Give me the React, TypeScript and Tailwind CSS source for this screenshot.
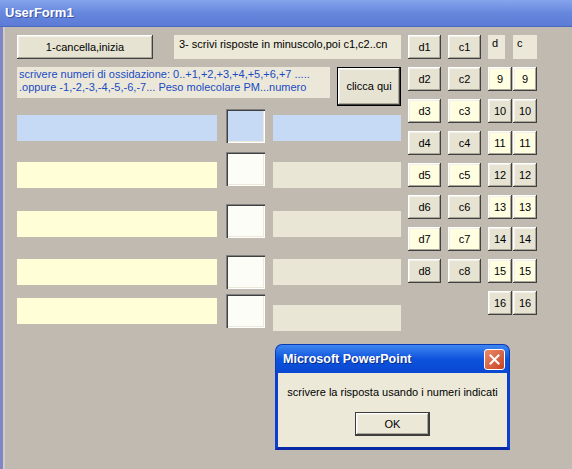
import React from "react";

const font = { fontFamily: '"Liberation Sans", Arial, sans-serif' };

const raised =
  "shadow-[inset_-1px_-1px_0_#404040,inset_1px_1px_0_#ffffff,inset_-2px_-2px_0_#aca899,inset_2px_2px_0_#f4f2e8]";
const sunken =
  "shadow-[inset_1px_1px_0_#808080,inset_2px_2px_0_#404040,inset_-1px_-1px_0_#ffffff,inset_-2px_-2px_0_#ece9d8]";

const Btn = ({
  children,
  className = "",
}: {
  children?: React.ReactNode;
  className?: string;
}) => (
  <div
    className={`flex items-center justify-center text-[11px] text-black ${raised} ${className}`}
  >
    {children}
  </div>
);

const grey = "bg-[#e6e3d3]";
const yellow = "bg-[#fffee0]";

// rows of the d / c / number buttons
const gridRows = [2, 3, 4, 5, 6, 7, 8];

const TextRow = ({
  top,
  boxTop,
  rightTop,
  first = false,
}: {
  top: string;
  boxTop: string;
  rightTop: string;
  first?: boolean;
}) => (
  <div className={`flex h-[34px] items-start ${top}`}>
    <div
      className={`w-[200px] h-[26px] ${boxTop} ${first ? "bg-[#c6d9f5]" : "bg-[#fffed6]"}`}
    />
    <div
      className={`ml-[9px] w-[39px] h-[34px] ${sunken} ${first ? "bg-[#c6d9f5]" : "bg-[#fdfdf8]"}`}
    />
    <div
      className={`ml-[8px] w-[128px] h-[26px] ${rightTop} ${first ? "bg-[#c6d9f5]" : "bg-[#e9e6d6]"}`}
    />
  </div>
);

export default function App() {
  return (
    <div
      className="relative w-[572px] h-[469px] overflow-hidden bg-[#c0bab0] flex flex-col"
      style={font}
    >
      {/* title bar */}
      <div className="h-[27px] shrink-0 flex items-center pl-[5px] bg-gradient-to-b from-[#86a4ec] via-[#6787dd] to-[#5b7bd6] border-b border-[#4d68c0]">
        <span className="text-white font-bold text-[13px] [text-shadow:1px_1px_0_#3c55a8]">
          UserForm1
        </span>
      </div>

      {/* body */}
      <div className="flex-1 flex border-l-[3px] border-[#7f86c8]">
        <div className="w-[2px] bg-[#d2cdc4]" />
        <div className="flex pl-[12px] pt-[8px]">
          {/* left column */}
          <div className="w-[384px] flex flex-col">
            <div className="flex h-[24px]">
              <Btn className={`w-[136px] h-[24px] ${grey} text-[11.5px]`}>1-cancella,inizia</Btn>
              <div className="ml-[21px] w-[227px] h-[24px] bg-[#ece9d8] px-[5px] pt-[2px] text-[11px] leading-[14px] text-black whitespace-nowrap">
                3- scrivi risposte in minuscolo,poi c1,c2..cn
              </div>
            </div>
            <div className="flex items-start mt-[8px] h-[39px]">
              <div className="w-[313px] h-[31px] bg-[#ebe8d9] pl-[2px] pt-[1px] text-[11px] leading-[13px] text-[#1a4ac4] whitespace-nowrap">
                <div>scrivere numeri di ossidazione: 0..+1,+2,+3,+4,+5,+6,+7 .....</div>
                <div>.oppure -1,-2,-3,-4,-5,-6,-7... Peso molecolare PM...numero</div>
              </div>
              <div className="ml-[7px] w-[64px] h-[39px] border border-black">
                <Btn className={`w-full h-full ${grey} text-[11.5px]`}>clicca qui</Btn>
              </div>
            </div>
            <TextRow top="mt-[3px]" boxTop="mt-[6px]" rightTop="mt-[6px]" first />
            <TextRow top="mt-[9px]" boxTop="mt-[10px]" rightTop="mt-[10px]" />
            <TextRow top="mt-[18px]" boxTop="mt-[7px]" rightTop="mt-[7px]" />
            <TextRow top="mt-[17px]" boxTop="mt-[4px]" rightTop="mt-[4px]" />
            <TextRow top="mt-[5px]" boxTop="mt-[4px]" rightTop="mt-[11px]" />
          </div>

          {/* right button grid */}
          <div className="ml-[7px] flex flex-col gap-[8px]">
            <div className="flex h-[24px]">
              <Btn className={`w-[33px] h-[24px] ${grey}`}>d1</Btn>
              <Btn className={`ml-[7px] w-[33px] h-[24px] ${grey}`}>c1</Btn>
              <div className="ml-[7px] w-[17px] h-[24px] bg-[#ebe8d9] pl-[4px] pt-[1px] text-[11px] leading-[14px]">
                d
              </div>
              <div className="ml-[8px] w-[24px] h-[24px] bg-[#ebe8d9] pl-[4px] pt-[1px] text-[11px] leading-[14px]">
                c
              </div>
            </div>
            {gridRows.map((i) => {
              const dc = i % 2 === 1 ? yellow : grey;
              const num = i % 2 === 0 ? yellow : grey;
              return (
                <div key={i} className="flex h-[24px]">
                  <Btn className={`w-[33px] h-[24px] ${dc}`}>d{i}</Btn>
                  <Btn className={`ml-[7px] w-[33px] h-[24px] ${dc}`}>c{i}</Btn>
                  <Btn className={`ml-[7px] w-[24px] h-[24px] ${num}`}>{i + 7}</Btn>
                  <Btn className={`ml-[1px] w-[24px] h-[24px] ${num}`}>{i + 7}</Btn>
                </div>
              );
            })}
            <div className="flex h-[24px] pl-[80px]">
              <Btn className={`w-[24px] h-[24px] ${grey}`}>16</Btn>
              <Btn className={`ml-[1px] w-[24px] h-[24px] ${grey}`}>16</Btn>
            </div>
          </div>
        </div>
      </div>

      {/* message box */}
      <div className="absolute left-[275px] top-[344px] w-[235px] h-[106px] flex flex-col">
        <div className="h-[29px] shrink-0 rounded-t-[7px] flex items-center justify-between pl-[7px] pr-[4px] bg-gradient-to-b from-[#3f86f0] via-[#0d52dc] to-[#0a48d2] border border-b-0 border-[#0a3ab8]">
          <span className="text-white font-bold text-[12.5px] [text-shadow:1px_1px_0_#0a2a8a]">
            Microsoft PowerPoint
          </span>
          <div className="w-[21px] h-[21px] rounded-[3px] border border-white bg-gradient-to-br from-[#e98a6a] to-[#c8401f] flex items-center justify-center">
            <svg width="11" height="11" viewBox="0 0 11 11">
              <path d="M1.5 1.5 L9.5 9.5 M9.5 1.5 L1.5 9.5" stroke="#ffffff" strokeWidth="2" strokeLinecap="square" />
            </svg>
          </div>
        </div>
        <div className="flex-1 bg-[#ece9d8] border-[3px] border-t-0 border-[#0a3fd0] border-b-[#0828a8] flex flex-col items-center">
          <div className="mt-[12px] text-[11px] leading-[14px] text-black">
            scrivere la risposta usando i numeri indicati
          </div>
          <div className="mt-[13px] w-[75px] h-[24px] border border-[#3c3c3c]">
            <Btn className="w-full h-full bg-[#ebe8d8]">OK</Btn>
          </div>
        </div>
      </div>
    </div>
  );
}
